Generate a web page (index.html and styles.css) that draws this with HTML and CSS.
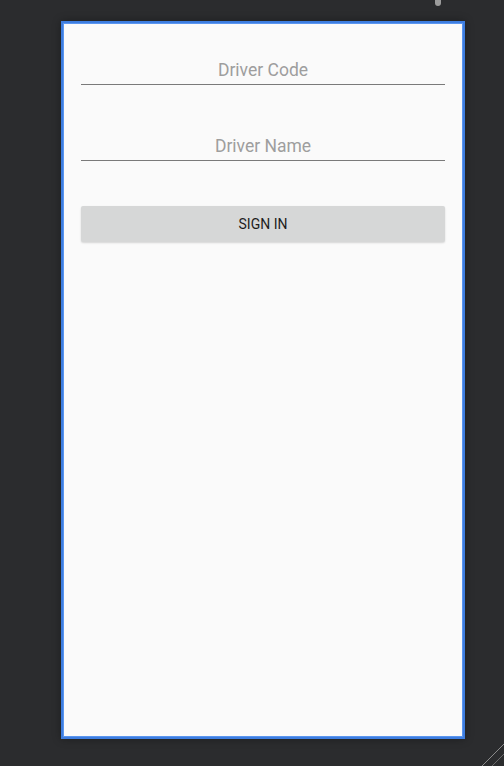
FILE: index.html
```html
<!DOCTYPE html>
<html>
<head>
<meta charset="utf-8">
<link rel="stylesheet" href="styles.css">
</head>
<body>
<div class="scroll-thumb"></div>
<div class="device">
  <div class="screen">
    <div class="field field-first"><span class="hint">Driver Code</span></div>
    <div class="field field-second"><span class="hint">Driver Name</span></div>
    <div class="button">SIGN IN</div>
  </div>
</div>
<svg class="grip" width="24" height="22" viewBox="0 0 24 22">
  <line x1="24" y1="0" x2="2" y2="22" stroke="#8a8a8a" stroke-width="1"/>
  <line x1="24" y1="10" x2="12" y2="22" stroke="#6a6a6a" stroke-width="1"/>
</svg>
</body>
</html>
```
FILE: styles.css
```css
html, body {
  margin: 0;
  padding: 0;
}
body {
  background: #2b2c2e;
  width: 504px;
  height: 766px;
  overflow: hidden;
  position: relative;
  font-family: Roboto, "Noto Sans", sans-serif;
}
.scroll-thumb {
  position: absolute;
  left: 435px;
  top: -4px;
  width: 6px;
  height: 10px;
  border-radius: 3px;
  background: #9c9c9c;
}
.device {
  margin: 21px 0 0 61px;
  width: 404px;
  height: 718px;
  box-sizing: border-box;
  border: 2px solid #3d7de0;
  box-shadow: 0 0 8px rgba(0,0,0,0.35), inset 0 0 0 1px #5b95ee;
  background: #fafafa;
}
.screen {
  padding: 0 18px;
  display: flex;
  flex-direction: column;
}
.field {
  border-bottom: 1px solid #7a7a7a;
  padding-bottom: 4px;
  text-align: center;
}
.field-first {
  margin-top: 37px;
}
.field-second {
  margin-top: 51px;
}
.hint {
  display: block;
  font-size: 17.5px;
  line-height: 20px;
  color: #9e9e9e;
}
.button {
  margin-top: 45px;
  height: 36px;
  line-height: 36px;
  background: #d6d7d7;
  border-radius: 2px;
  text-align: center;
  font-size: 14px;
  font-weight: 400;
  color: #1e1e1e;
  box-shadow: 0 1px 2px rgba(0,0,0,0.15);
}
.grip {
  position: absolute;
  right: 0;
  bottom: 0;
}
```
